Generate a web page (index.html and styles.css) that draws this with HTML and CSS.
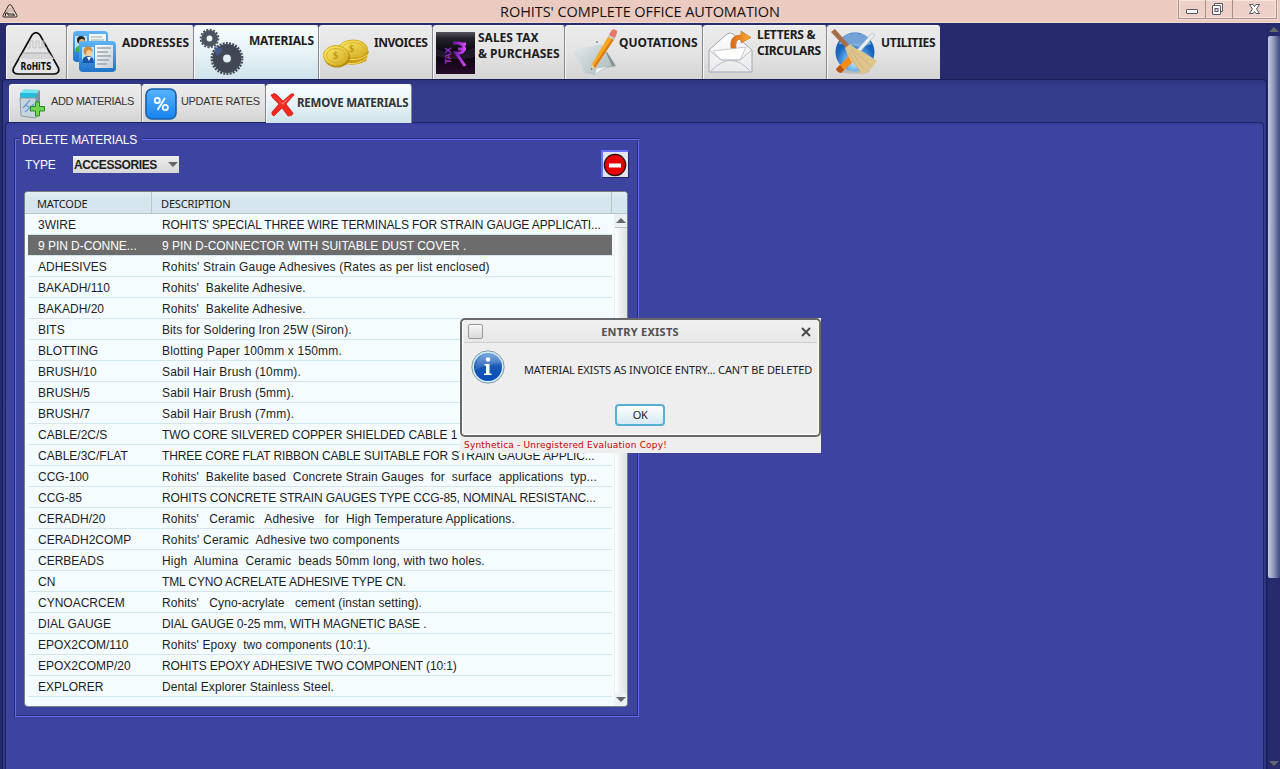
FILE: index.html
```html
<!DOCTYPE html>
<html lang="en">
<head>
<meta charset="utf-8">
<title>ROHITS' COMPLETE OFFICE AUTOMATION</title>
<link rel="stylesheet" href="styles.css">
</head>
<body>
<div class="window">
  <header class="titlebar">
    <svg class="app-icon" width="18" height="16" viewBox="0 0 18 16"><path d="M7.500 2.500Q9 .5 10.500 2.500L16 12.500Q16.500 14 14.500 14H3Q1.500 14 2 12.500Z" fill="#f0d5cb" stroke="#222" stroke-width="1"/><path d="M6 9V5.500M8 9V5M10 9V5M12 9V6" stroke="#b8a29b"/><path d="M4.500 13V10H7V12M8 13V10M10 10V13M12 10V13M13 11V13" fill="none" stroke="#222"/></svg>
    <h1 class="title">ROHITS' COMPLETE OFFICE AUTOMATION</h1>
    <div class="controls">
      <span class="ctl"><svg width="26" height="18" viewBox="0 0 26 18"><rect x="7.500" y="9.500" width="11" height="4" rx=".5" fill="#fff" stroke="#555566"/></svg></span>
      <span class="ctl"><svg width="25" height="18" viewBox="0 0 25 18"><path d="M8.500 3.500h8v8h-8z" fill="#fff" stroke="#555566"/><rect x="6.500" y="5.500" width="8" height="9" rx=".5" fill="#fff" stroke="#555566"/><rect x="9" y="8.500" width="3" height="3" fill="#edd4ce" stroke="#555566"/></svg></span>
      <span class="ctl wide"><svg width="44" height="18" viewBox="0 0 44 18"><path d="M16.500 4.500h3.500l1.500 2 1.500-2h3.500l-3 4.500 3 4.500H23l-1.500-2-1.500 2h-3.500l3-4.500z" fill="#fff" stroke="#555566"/></svg></span>
    </div>
  </header>

  <div class="body">
    <main class="main">
      <nav class="tabs">
        <div class="tab t-logo">
          <svg width="50" height="46" viewBox="0 0 50 46"><path d="M21 4Q25-.8 29 4L47.500 37Q49 42.500 43 43H7Q.5 42.500 2.500 37Z" fill="#e6e6e8" stroke="#0b0b0b" stroke-width="1.700"/><path d="M12 22h26l5 6H8z" fill="#d6d6d8"/><path d="M16 17h3v-7h3v7h3v-7h3v7h3v-7h2v7h3" fill="none" stroke="#c0c0c2"/><path d="M12 22h26" stroke="#a8a8aa"/><text x="9.500" y="39" class="logo-text" textLength="31" lengthAdjust="spacingAndGlyphs">RoHiTS</text></svg>
        </div>
        <div class="tab t-addr">
          <svg width="46" height="45" viewBox="0 0 46 45"><defs><linearGradient id="card" x2="0" y2="1"><stop stop-color="#5eb4f4"/><stop offset="1" stop-color="#2173c9"/></linearGradient><linearGradient id="paper" x2="1" y2="1"><stop stop-color="#fff"/><stop offset="1" stop-color="#c5cdd5"/></linearGradient></defs><rect x="0" y="1" width="35" height="31" rx="4" fill="url(#card)"/><rect x="16" y="4" width="17" height="23" fill="#eff5f9"/><rect x="2" y="6" width="12" height="16" fill="#b8e3fd"/><circle cx="8" cy="10" r="4" fill="#222"/><circle cx="9" cy="12" r="3" fill="#edb56b"/><path d="M2 22q0-7 7-7 5 0 5 7z" fill="#37b34a"/><path d="M18 7h11M18 10h13" stroke="#9aa"/><rect x="6" y="11" width="37" height="31" rx="4" fill="url(#card)"/><path d="M22 15h18v23H22z" fill="url(#paper)"/><rect x="9" y="17" width="12" height="16" fill="#b8e3fd"/><circle cx="15" cy="21" r="4.500" fill="#d6883b"/><circle cx="16" cy="23" r="3" fill="#f8cd91"/><path d="M9 33q0-7 6-7 6 0 6 7z" fill="#1757a7"/><path d="m14 27 2 4 2-4" fill="#fff"/><path d="M24 22h11M24 26h14M24 30h12M24 34h10M24 18h14" stroke="#9ba4ad" stroke-width="1.300"/></svg>
          <span class="cap">ADDRESSES</span>
        </div>
        <div class="tab active t-mat">
          <svg width="46" height="48" viewBox="0 0 46 48"><circle cx="9.500" cy="10.500" r="5.600" fill="none" stroke="#4d5562" stroke-width="5.400"/><circle cx="9.500" cy="10.500" r="8.800" fill="none" stroke="#4d5562" stroke-width="2" stroke-dasharray="2 1.450"/><circle cx="27" cy="30.500" r="9.200" fill="none" stroke="#424756" stroke-width="10.500"/><circle cx="27" cy="30.500" r="15.300" fill="none" stroke="#424756" stroke-width="2.200" stroke-dasharray="2 1.205"/><path d="M14 19q3-2 5 1 4 0 3 4l-5 4q-3-5-3-9z" fill="#4a67b0" opacity=".6"/></svg>
          <span class="cap">MATERIALS</span>
        </div>
        <div class="tab t-inv">
          <svg width="47" height="32" viewBox="0 0 47 32"><defs><linearGradient id="gold" x2="1" y2="1"><stop stop-color="#fff06a"/><stop offset="1" stop-color="#d3a51e"/></linearGradient></defs><path d="M17 10v14q12 6 26-1l3-10z" fill="#c99b13"/><path d="M20 24q14 5 25-5M20 20q14 5 26-4" stroke="#f6df55" fill="none"/><ellipse cx="30" cy="11" rx="14.500" ry="9" fill="url(#gold)" stroke="#d5ad23"/><ellipse cx="30" cy="11" rx="11" ry="6.500" fill="none" stroke="#d8b935"/><text x="26" y="14" class="coin">$</text><ellipse cx="14" cy="19" rx="13" ry="10.500" fill="#b58a11"/><ellipse cx="13" cy="17.500" rx="12.500" ry="10" fill="url(#gold)" stroke="#d0ab20"/><ellipse cx="13" cy="17.500" rx="9.500" ry="7" fill="none" stroke="#d2b02d"/><text x="10" y="21" class="coin">$</text></svg>
          <span class="cap">INVOICES</span>
        </div>
        <div class="tab t-tax">
          <svg width="39" height="42" viewBox="0 0 39 42"><defs><linearGradient id="night" x2="0" y2="1"><stop stop-color="#55545e"/><stop offset=".15" stop-color="#25222c"/><stop offset=".5" stop-color="#060309"/><stop offset="1" stop-color="#280b2c"/></linearGradient><linearGradient id="violet" x2="1"><stop stop-color="#6414a6"/><stop offset="1" stop-color="#dc4bff"/></linearGradient></defs><path d="M0 0h39v42H0z" fill="url(#night)"/><path d="M0 17q20 8 39-2v10q-20 5-39-1z" fill="#382942" opacity=".5"/><text class="tax-text" transform="translate(15 32) rotate(-90)">TAX</text><path d="M17 11h4q7 0 7 5 0 6-8 5l9 13M24 12h6M22 17h8" fill="none" stroke="url(#violet)" stroke-width="3"/></svg>
          <span class="cap">SALES TAX<br>&amp; PURCHASES</span>
        </div>
        <div class="tab t-quo">
          <svg width="49" height="50" viewBox="0 0 49 50"><defs><linearGradient id="sheet" x2="1" y2="1"><stop stop-color="#e0e8ea"/><stop offset="1" stop-color="#a9b8bd"/></linearGradient></defs><path d="m2 24 26-4 12 16-28 6-4-4z" fill="#d3dcdf"/><path d="m15 43 29-5-9-14-21 4z" fill="#84939a"/><path d="m5 21 25-5 10 22q-10 1-17 9l-11-2z" fill="url(#sheet)"/><path d="m23 47 1-7 15-2q-9 2-16 9z" fill="#eef2f3" stroke="#a6b2b6" stroke-width=".5"/><path d="m37 7 6 3-20 30-4 2 1-6z" fill="#f8a91f"/><path d="m41 9 2 1-20 30-2-1z" fill="#dc7b14"/><path d="m37 7 2-4q2-3 5-1 2 1 1 3l-2 5z" fill="#e97767"/><path d="m37 7 6 3-1 2-6-3z" fill="#c3c8cb"/><path d="m19 42 1-6 3 4z" fill="#ead0a3"/><path d="m19 42 .5-2 1 1z" fill="#333"/><circle cx="25" cy="14" r="1" fill="#789"/></svg>
          <span class="cap">QUOTATIONS</span>
        </div>
        <div class="tab t-let">
          <svg width="44" height="43" viewBox="0 0 44 43"><defs><linearGradient id="mail" x2="0" y2="1"><stop stop-color="#fff"/><stop offset="1" stop-color="#e8e9ec"/></linearGradient><linearGradient id="orange" x2="1"><stop stop-color="#d8691e"/><stop offset="1" stop-color="#ffae2c"/></linearGradient></defs><path d="M1 20 19 4q3-2 6 0l19 16v22H1z" fill="url(#mail)" stroke="#a1a5ab"/><path d="m5 21 33-4-6 13H13z" fill="#fff" stroke="#c6c9cd"/><path d="m1 20 12 10h19l12-10M3 41q20-21 39 0" fill="none" stroke="#b9bdc4"/><path d="M23 18Q21 5 33 5V1l10 6.500L33 13v-4q-6 0-5 9z" fill="url(#orange)" stroke="#c56a21" stroke-width=".6"/></svg>
          <span class="cap">LETTERS &amp;<br>CIRCULARS</span>
        </div>
        <div class="tab t-uti">
          <svg width="47" height="47" viewBox="0 0 47 47"><defs><radialGradient id="ball" cx=".5" cy=".75"><stop stop-color="#cfefff"/><stop offset=".55" stop-color="#5da8e9"/><stop offset="1" stop-color="#1865bb"/></radialGradient></defs><ellipse cx="25" cy="43" rx="15" ry="3" fill="#bbb"/><circle cx="25" cy="24" r="19.500" fill="url(#ball)"/><path d="M9 16q3-11 16-11t16 11q-8 4-16 2T9 16" fill="#fff" opacity=".4"/><path d="m42 5 3 2-16 18-3-2z" fill="#e8eef2" stroke="#9bacb8" stroke-width=".6"/><path d="m20 27 5 5-14 13q-4-1-5-4z" fill="#f98a16"/><path d="m10 37 4 5-3 3q-4-1-5-4z" fill="#ba5119"/><path d="m1 4 4-3 15 17-3 3z" fill="#a66d48"/><path d="m15 20 5-4q4 4 13 8 7 4 14 9-6 10-15 14-4-9-11-14-4-6-6-13z" fill="#dec58c"/><path d="m21 22 13 20M22 21l19 17M19 25l11 19M15 20l5-4" stroke="#c4a76e" stroke-width=".6" fill="none"/></svg>
          <span class="cap">UTILITIES</span>
        </div>
      </nav>

      <section class="outer">
        <nav class="subtabs">
          <div class="sub s-add">
            <svg width="28" height="31" viewBox="0 0 28 31"><path d="m2 5 4-4 16 1-4 4z" fill="#76e3f1"/><path d="M2 5h16v6H2z" fill="#24bddb"/><path d="m18 6 4-4v22l-4 5z" fill="#7794a5"/><path d="M2 10h16v20L3 28z" fill="#c6d4dc" stroke="#879aa6"/><path d="m5 20 7-8M7 24l9-8M7 17l6 3" stroke="#6b9bd0" stroke-width="1.300"/><path d="M17.500 14h4v4.500h5v4.500h-5v5h-4v-5h-5v-4.500h5z" fill="#71d44f" stroke="#258d24"/></svg>
            <span>ADD MATERIALS</span>
          </div>
          <div class="sub s-upd"><svg width="32" height="32" viewBox="0 0 32 32"><defs><linearGradient id="pct" x2="0" y2="1"><stop stop-color="#58b3ff"/><stop offset="1" stop-color="#1583ef"/></linearGradient></defs><rect x="1" y="1" width="30" height="30" rx="6" fill="url(#pct)" stroke="#1760aa" stroke-width="1.600"/><circle cx="12.300" cy="12.500" r="2.600" fill="none" stroke="#fff" stroke-width="1.800"/><circle cx="20.300" cy="19.500" r="2.600" fill="none" stroke="#fff" stroke-width="1.800"/><path d="m20 10-7.500 12" stroke="#fff" stroke-width="1.800"/></svg><span>UPDATE RATES</span></div>
          <div class="sub active s-rem"><svg width="25" height="25" viewBox="0 0 25 25"><path d="M1 3q4-3 6 0l6 6 8-7q3-1 3 1l-8 9 7 9q0 3-5 3l-6-8-8 8q-3-1-2-4l7-8Q2 6 1 3z" fill="#f42a1f" stroke="#c91917" stroke-width=".7"/><path d="m3 3 9 8 9-7-8 9z" fill="#ff8579" opacity=".7"/></svg><span>REMOVE MATERIALS</span></div>
        </nav>

        <section class="inner">
          <div class="group">
            <h2 class="legend">DELETE MATERIALS</h2>
            <div class="toolbar">
              <span class="type">TYPE</span>
              <div class="combo"><span>ACCESSORIES</span><i class="arrow down"></i></div>
              <button class="remove"><svg width="24" height="24" viewBox="0 0 24 24"><circle cx="12" cy="12" r="10.700" fill="#e60006" stroke="#251010" stroke-width="1.200"/><path d="M6 10.500h12v4H6z" fill="#fff"/></svg></button>
            </div>
            <div class="grid">
              <div class="thead"><span class="c1">MATCODE</span><span class="c2">DESCRIPTION</span></div>
              <div class="tbody">
                <div class="rows">
                  <div class="row"><span>3WIRE</span><span class="caps">ROHITS' SPECIAL THREE WIRE TERMINALS FOR STRAIN GAUGE APPLICATI...</span></div>
                  <div class="row selected"><span>9 PIN D-CONNE...</span><span>9 PIN D-CONNECTOR WITH SUITABLE DUST COVER .</span></div>
                  <div class="row"><span>ADHESIVES</span><span class="mix loose">Rohits' Strain Gauge Adhesives (Rates as per list enclosed)</span></div>
                  <div class="row"><span>BAKADH/110</span><span class="mix">Rohits'  Bakelite Adhesive.</span></div>
                  <div class="row"><span>BAKADH/20</span><span class="mix">Rohits'  Bakelite Adhesive.</span></div>
                  <div class="row"><span>BITS</span><span class="mix">Bits for Soldering Iron 25W (Siron).</span></div>
                  <div class="row"><span>BLOTTING</span><span class="mix loose">Blotting Paper 100mm x 150mm.</span></div>
                  <div class="row"><span>BRUSH/10</span><span class="mix loose">Sabil Hair Brush (10mm).</span></div>
                  <div class="row"><span>BRUSH/5</span><span class="mix loose">Sabil Hair Brush (5mm).</span></div>
                  <div class="row"><span>BRUSH/7</span><span class="mix loose">Sabil Hair Brush (7mm).</span></div>
                  <div class="row"><span>CABLE/2C/S</span><span class="snug">TWO CORE SILVERED COPPER SHIELDED CABLE 1</span></div>
                  <div class="row"><span>CABLE/3C/FLAT</span><span class="caps">THREE CORE FLAT RIBBON CABLE SUITABLE FOR STRAIN GAUGE APPLIC...</span></div>
                  <div class="row"><span>CCG-100</span><span class="mix">Rohits'  Bakelite based  Concrete Strain Gauges  for  surface  applications  typ...</span></div>
                  <div class="row"><span>CCG-85</span><span class="caps">ROHITS CONCRETE STRAIN GAUGES TYPE CCG-85, NOMINAL RESISTANC...</span></div>
                  <div class="row"><span>CERADH/20</span><span class="mix">Rohits'   Ceramic   Adhesive   for  High Temperature Applications.</span></div>
                  <div class="row"><span>CERADH2COMP</span><span class="mix loose">Rohits' Ceramic  Adhesive two components</span></div>
                  <div class="row"><span>CERBEADS</span><span class="mix loose">High  Alumina  Ceramic  beads 50mm long, with two holes.</span></div>
                  <div class="row"><span>CN</span><span class="caps">TML CYNO ACRELATE ADHESIVE TYPE CN.</span></div>
                  <div class="row"><span>CYNOACRCEM</span><span class="mix">Rohits'   Cyno-acrylate   cement (instan setting).</span></div>
                  <div class="row"><span>DIAL GAUGE</span><span class="caps">DIAL GAUGE 0-25 mm, WITH MAGNETIC BASE .</span></div>
                  <div class="row"><span>EPOX2COM/110</span><span class="mix">Rohits' Epoxy  two components (10:1).</span></div>
                  <div class="row"><span>EPOX2COMP/20</span><span class="caps">ROHITS EPOXY ADHESIVE TWO COMPONENT (10:1)</span></div>
                  <div class="row"><span>EXPLORER</span><span class="mix">Dental Explorer Stainless Steel.</span></div>
                </div>
                <div class="vbar"><i class="arrow up"></i><div class="thumb"></div><i class="arrow down"></i></div>
              </div>
            </div>
          </div>
        </section>
      </section>
    </main>
    <aside class="page-bar"><i class="arrow up"></i><div class="page-thumb"></div><i class="arrow down"></i></aside>
  </div>

  <div class="dialog-wrap">
    <div class="dialog">
      <div class="dlg-head"><i class="dlg-icon"></i><span>ENTRY EXISTS</span><svg width="10" height="10" viewBox="0 0 10 10"><path d="m1 2 8 8M9 2 1 10" stroke="#444" stroke-width="1.800"/></svg></div>
      <div class="dlg-body">
        <svg width="36" height="36" viewBox="0 0 36 36"><defs><linearGradient id="info" x2="0" y2="1"><stop stop-color="#6da1dc"/><stop offset=".5" stop-color="#1756b5"/><stop offset="1" stop-color="#074db9"/></linearGradient></defs><circle cx="18" cy="18" r="16.200" fill="#d4eef7" stroke="#8298a4" stroke-width="1"/><circle cx="18" cy="18" r="14" fill="url(#info)"/><path d="M5 21Q6 5 20 5q9 1 11 9-11 0-26 7" fill="#fff" opacity=".13"/><circle cx="18" cy="10.500" r="2.200" fill="#fff"/><path d="M14.500 15h5v9.500h2V26h-7.500v-1.500h2v-8h-1.500z" fill="#fff"/></svg>
        <span>MATERIAL EXISTS AS INVOICE ENTRY... CAN'T BE DELETED</span>
      </div>
      <button class="ok">OK</button>
    </div>
    <div class="notice">Synthetica - Unregistered Evaluation Copy!</div>
  </div>
</div>
</body>
</html>
```
FILE: styles.css
```css
* { box-sizing: border-box; }
body { margin: 0; overflow: hidden; font: 12px "Liberation Sans", Arial, sans-serif; color: #1c1c1c; }
svg { display: block; flex: none; overflow: visible; }
span { white-space: pre; }
h1, h2 { margin: 0; font-weight: 400; }
.window { position: relative; width: 1280px; height: 769px; background: #252b6c; display: flex; flex-direction: column; }

.titlebar { height: 23px; flex: none; display: grid; grid-template-columns: 102px 1fr 102px; background: #ebcbc0; border-bottom: 1px solid #f1dcd5; }
.app-icon { margin: 3px 0 0 1px; }
.title { font: 14.5px/23px "Open Sans", sans-serif; text-align: center; color: #151010; letter-spacing: -.07px; }
.controls { display: flex; width: 99px; height: 19px; border: 1px solid #a98f87; border-top: 0; box-shadow: inset 0 0 0 1px #f7e5df, 0 0 0 1px #f5dfd8; background: #edd0c7; }
.ctl { width: 27px; border-right: 1px solid #a98f87; overflow: hidden; }
.ctl.wide { flex: 1; border: 0; }

.body { flex: 1; display: flex; min-height: 0; }
.main { width: 1267px; display: flex; flex-direction: column; padding-left: 2px; padding-top: 2px; }
.tabs { display: flex; height: 54px; padding-left: 4px; flex: none; }
.tab { display: flex; height: 54px; border-right: 1px solid #85868e; border-left: 1px solid #f7f7f7; border-top: 1px solid #f7f7f7; border-radius: 3px 3px 0 0; background: linear-gradient(#ebebec, #e4e4e5 50%, #d4d4d5); font: bold 12px/16px "Noto Sans", sans-serif; letter-spacing: -.3px; }
.tab.active, .sub.active { background: linear-gradient(#f7fdff, #e7f3f7 50%, #cfe2ea); }
.t-logo { width: 61px; padding: 5px 0 0 4px; }
.t-addr { width: 127px; padding: 4px 0 0 5px; }
.t-mat { width: 125px; padding: 2px 0 0 5px; }
.t-inv { width: 114px; padding: 12px 0 0 3px; }
.t-tax { width: 132px; padding: 6px 0 0 2px; }
.t-quo { width: 138px; padding: 2px 0 0 6px; }
.t-let { width: 124px; padding: 4px 0 0 4px; }
.t-uti { width: 113px; padding: 2px 0 0 2px; border-right: 0; }
.t-addr .cap { margin: 5px 0 0 3px; letter-spacing: 0; }
.t-mat .cap { margin: 5px 0 0 3px; letter-spacing: -.2px; }
.t-inv .cap { margin: -3px 0 0 4px; letter-spacing: -.5px; }
.t-tax .cap { margin: -2px 0 0 3px; letter-spacing: 0; }
.t-quo .cap { margin: 7px 0 0 -2px; letter-spacing: 0; }
.t-let .cap { margin: -3px 0 0 5px; }
.t-uti .cap { margin: 7px 0 0 4px; }
.logo-text { font: bold 10.5px "DejaVu Sans", sans-serif; fill: #111; letter-spacing: 0; }
.coin { font: bold 10px "Liberation Serif", serif; fill: #b99415; }
.tax-text { font: bold 9px "Liberation Sans", sans-serif; fill: #a22fd4; }

.outer { flex: 1; min-height: 0; display: flex; flex-direction: column; background: linear-gradient(#2c347e, #343d8c 8px, #343d8c 45px, #303882); border: 1px solid #191d55; border-width: 1px 1px 0; border-radius: 4px 4px 0 0; box-shadow: inset 1px 0 #313a8d; }
.subtabs { display: flex; height: 43px; padding: 4px 0 0 6px; flex: none; }
.sub { height: 38px; display: flex; align-items: center; border-right: 1px solid #85868e; border-left: 1px solid #f5f5f5; border-top: 1px solid #f7f7f7; border-radius: 3px 3px 0 0; background: linear-gradient(#ebebec, #e3e3e4 50%, #d3d3d4); color: #333; }
.s-add { width: 133px; padding-left: 8px; }
.s-upd { width: 124px; padding-left: 2px; }
.s-rem { position: relative; width: 146px; height: 39px; padding-left: 3px; }
.s-add span { margin: -6px 0 0 5px; font-size: 11px; letter-spacing: -.38px; }
.s-upd span { margin: -6px 0 0 4px; font-size: 11px; letter-spacing: -.34px; }
.s-rem span { margin: -4px 0 0 2px; font: bold 11.5px "Noto Sans", sans-serif; letter-spacing: -.2px; }
.inner { flex: 1; min-height: 0; margin: -1px 2px 0; background: #3d44a0; border: 1px solid #1e2361; border-width: 1px 1px 0; border-radius: 4px 4px 0 0; box-shadow: inset 0 2px #3740a0; padding: 9px 0 0 8px; }

.group { position: relative; width: 625px; height: 585px; padding: 0 0 0 10px; }
.group::before { content: ""; position: absolute; inset: 7px 0 0 1px; border: 1px solid #6169ee; box-shadow: inset -1px -1px #272d79, 0 -1px #272d79, -1px 0 #272d79; pointer-events: none; }
.legend { position: relative; width: 122px; height: 16px; margin-left: -4px; padding-left: 2px; font-size: 12px; line-height: 16px; letter-spacing: -.12px; color: #fff; background: #3d44a0; }
.toolbar { height: 43px; display: flex; align-items: flex-start; }
.type { width: 49px; padding-left: 1px; color: #fff; margin-top: 10px; font-size: 12px; line-height: 15px; letter-spacing: -.2px; }
.combo { width: 106px; height: 17px; margin-top: 8px; padding: 0 1px 0 1px; display: flex; justify-content: space-between; align-items: center; background: linear-gradient(#eee, #d7d7d8); font-weight: bold; font-size: 12px; letter-spacing: -.4px; }
.arrow { width: 0; height: 0; border: 5px solid transparent; }
.arrow.down { border-top-color: #65676b; border-bottom: 0; }
.arrow.up { border-bottom-color: #65676b; border-top: 0; }
.remove { width: 28px; height: 28px; margin: 2px 0 0 422px; padding: 0; border: 1px solid; border-width: 2px 1px 1px 2px; border-color: #6770f0 #202568 #202568 #6770f0; background: #e4e5eb; }

.grid { width: 604px; height: 516px; border: 1px solid #778087; border-radius: 4px; overflow: hidden; background: #f4fcff; }
.thead { height: 22px; display: flex; align-items: stretch; background: linear-gradient(#e5eff3, #d6e6ee 7px, #d6e6ee); border-bottom: 1px solid #bac5ca; font: 11px/22px "Noto Sans", sans-serif; }
.c1 { width: 127px; padding-left: 12px; border-right: 1px solid #bac5ca; padding-top: 1px; letter-spacing: -.15px; }
.c2 { width: 460px; padding-left: 9px; border-right: 1px solid #bac5ca; padding-top: 1px; letter-spacing: -.15px; }
.tbody { display: flex; justify-content: space-between; height: 492px; }
.rows { margin-left: 3px; width: 584px; }
.row { display: grid; grid-template-columns: 124px 1fr; padding-left: 10px; height: 21px; border-bottom: 1px solid #d3e5ef; line-height: 22px; font-size: 12px; letter-spacing: 0; }
.row.selected { background: #6c6c6c; color: #fff; }
.row.selected span { letter-spacing: -.04px; }
.caps { letter-spacing: -.13px; }
.snug { letter-spacing: -.06px; }
.mix { letter-spacing: .1px; }
.mix.loose { letter-spacing: .18px; }
.vbar { width: 13px; display: flex; flex-direction: column; align-items: center; justify-content: space-between; padding: 4px 0 4px; background: #eaf0f3; }
.thumb { flex: 1; width: 12px; margin: 4px 0 4px; background: linear-gradient(90deg, #fff, #edf1f3 40%, #dde3e5); border-top: 1px solid #b8bec1; }
.page-bar { width: 13px; display: flex; flex-direction: column; align-items: center; padding: 4px 0 3px; border-left: 1px solid #202660; }
.page-thumb { width: 12px; height: 542px; margin: 4px 0 auto; border-radius: 2px; background: linear-gradient(90deg, #c5cbe0, #929bbb 45%, #4a548b 90%); }

.dialog-wrap { position: absolute; left: 460px; top: 318px; width: 361px; height: 135px; background: #eeeeee; }
.dialog { height: 119px; border: 2px solid #68686a; border-radius: 5px; box-shadow: inset 0 0 0 1px #fff; background: #eee; display: flex; flex-direction: column; }
.dlg-head { height: 23px; margin: 0 2px; padding: 0 6px 0 4px; display: grid; grid-template-columns: 16px 1fr 10px; align-items: center; background: linear-gradient(#f1f1f1, #e7e7e7); border-bottom: 1px solid #cfcfcf; text-align: center; font: bold 11px "Noto Sans", sans-serif; letter-spacing: .25px; color: #505050; }
.dlg-head span { margin-right: 5px; }
.dlg-icon { width: 15px; height: 15px; border: 1px solid #999; border-radius: 2px; background: linear-gradient(#f8f8f8, #d8d8d8); }
.dlg-body { display: flex; align-items: center; height: 47px; padding-left: 8px; gap: 18px; font: 11px "Noto Sans", sans-serif; letter-spacing: -.15px; }
.dlg-body span { margin-top: 6px; }
.ok { width: 50px; height: 22px; margin: 14px 0 0 153px; padding: 0; border: 2px solid #56b0d4; border-radius: 4px; background: linear-gradient(#fbfeff, #d8eaf2); font: 11px/16px "Noto Sans", sans-serif; letter-spacing: -.5px; color: #222; }
.notice { padding: 1px 0 0 4px; font: 9px/15px "DejaVu Sans", sans-serif; letter-spacing: .2px; color: #c60000; }
```
